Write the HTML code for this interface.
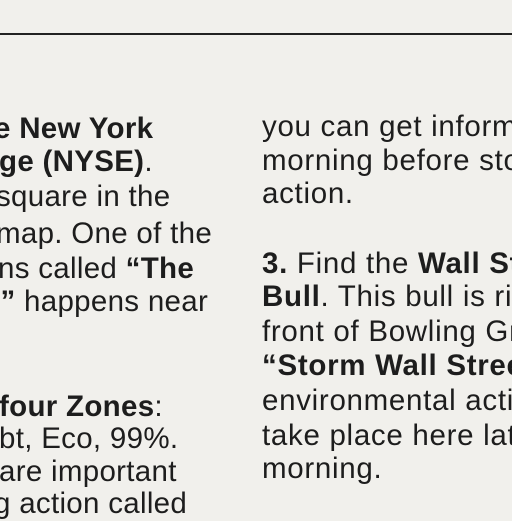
<!DOCTYPE html>
<html><head><style>
html,body{margin:0;padding:0;}
body{width:512px;height:512px;overflow:hidden;background:#f1f0ec;position:relative;font-family:"Liberation Sans",sans-serif;color:#1d1d1d;}
.rule{position:absolute;left:0;top:33px;width:512px;height:2px;background:#222;}
.l{position:absolute;font-size:29.5px;line-height:34px;white-space:nowrap;overflow:hidden;letter-spacing:0.3px;}
.r{left:262px;width:250px;letter-spacing:0.7px;}
b{font-weight:bold;}
</style></head><body>
<div class="rule"></div>
<div class="l" style="left:-6px;top:112px"><b>e New York</b></div>
<div class="l" style="left:-1px;top:145px"><b>ge (NYSE)</b>.</div>
<div class="l" style="left:-4px;top:180px">square in the</div>
<div class="l" style="left:-4px;top:217px">map. One of the</div>
<div class="l" style="left:-2px;top:252px">ns called <b>“The</b></div>
<div class="l" style="left:-8px;top:285px"><b>.”</b> happens near</div>
<div class="l" style="left:-1px;top:390px"><b>four Zones</b>:</div>
<div class="l" style="left:-1px;top:422px">bt, Eco, 99%.</div>
<div class="l" style="left:-1px;top:455px">are important</div>
<div class="l" style="left:-6px;top:487px;width:230px">g action called</div>

<div class="l r" style="top:110px">you can get information</div>
<div class="l r" style="top:144px">morning before stock</div>
<div class="l r" style="top:177px">action.</div>
<div class="l r" style="top:247px"><b>3.</b> Find the <b>Wall Street</b></div>
<div class="l r" style="top:280px"><b>Bull</b>. This bull is right in</div>
<div class="l r" style="top:315px">front of Bowling Green.</div>
<div class="l r" style="top:349px"><b>“Storm Wall Street”</b></div>
<div class="l r" style="top:384px">environmental action will</div>
<div class="l r" style="top:419px">take place here later this</div>
<div class="l r" style="top:452px">morning.</div>
</body></html>
